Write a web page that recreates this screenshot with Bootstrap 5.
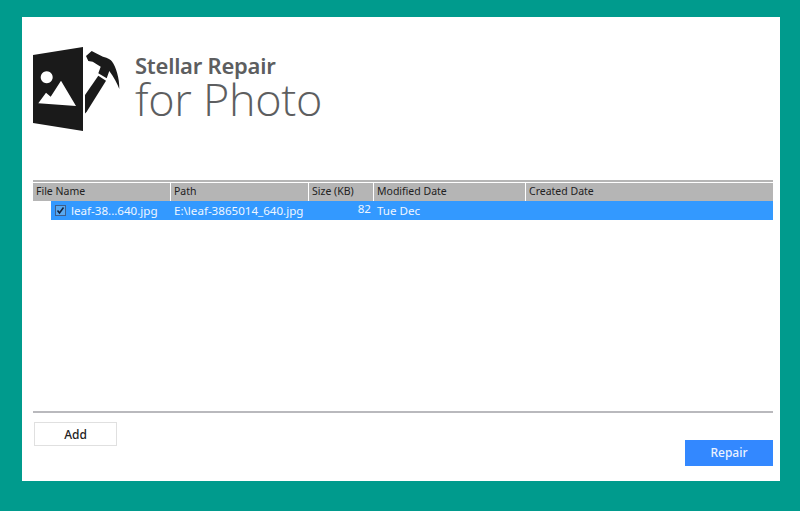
<!DOCTYPE html>
<html lang="en">
<head>
    <meta charset="UTF-8">
    <title>Stellar Repair for Photo</title>
    <link href="https://cdn.jsdelivr.net/npm/bootstrap@5.3.0/dist/css/bootstrap.min.css" rel="stylesheet">
    <style>
        body {
            width: 800px;
            height: 511px;
            overflow: hidden;
            background: #009b8d;
            padding: 17px 20px 30px 22px;
            font-family: "Noto Sans", "Open Sans", sans-serif;
            font-size: 11.6px;
        }
        .app-panel {
            height: 464px;
            background: #fff;
            padding: 29px 7px 14px 11px;
        }
        .logo-row { height: 134px; }
        .logo-icon { width: 90px; height: 88px; }
        .logo-text { margin-left: 12px; color: #5d5e60; margin-top: 7px; }
        .logo-top { font-size: 22px; font-weight: 600; line-height: 24px; letter-spacing: -0.25px; }
        .logo-bottom { font-family: "Open Sans", sans-serif; font-size: 45px; font-weight: 300; line-height: 44px; letter-spacing: -0.3px; }
        .file-head {
            border-top: 2px solid #b5b5b5;
            height: 21px;
            padding-top: 1px;
            color: #222;
            font-size: 10.500px;
        }
        .file-head > div {
            background: #b5b5b5;
            height: 18px;
            line-height: 16px;
            padding-left: 3px;
            margin-right: 1px;
            white-space: nowrap;
        }
        .col-name { width: 137px; }
        .col-path { width: 137px; }
        .col-size { width: 64px; }
        .col-mod { width: 151px; }
        .col-made { flex: 1; margin-right: 0 !important; }
        .file-row {
            margin-left: 18px;
            height: 19px;
            line-height: 19px;
            background: #3399ff;
            color: #eef6ff;
        }
        .row-name { width: 120px; padding-left: 4px; }
        .row-path { width: 138px; padding-left: 3px; }
        .row-size { width: 65px; text-align: right; padding-right: 3px; line-height: 16px; }
        .row-mod { padding-left: 3px; }
        .tick-box {
            width: 11px;
            height: 11px;
            background: #5aa9f0;
            border: 1px solid #3f5f8c;
            margin-right: 5px;
        }
        .list-space { height: 191px; }
        .bottom-rule { border-top: 2px solid #b9b9bd; }
        .add-btn {
            width: 83px;
            height: 24px;
            margin: 9px 0 0 1px;
            padding: 1px 0 0;
            border: 1px solid #e0e0e0;
            border-radius: 0;
            background: #fff;
            color: #222;
            font-size: 12px;
            font-weight: 500;
        }
        .repair-btn {
            width: 88px;
            height: 26px;
            margin-top: 27px;
            padding: 0;
            border: 0;
            border-radius: 0;
            background: #3388ff;
            color: #eaf2ff;
            font-size: 12px;
            font-weight: 500;
        }
    </style>
</head>
<body>
    <div class="app-panel">
        <div class="logo-row d-flex align-items-start">
            <svg class="logo-icon" viewBox="33 46 90 88" aria-hidden="true">
                <path fill="#1a1a1a" fill-rule="evenodd" d="M33 55 83 47V131L33 123Z M46.700 71.300a6 6 0 1 0 0.010 0Z M38.300 103.300 46 92.700 50.700 96.700 61 80.700 76 106Z"/>
                <path fill="#1a1a1a" d="M86 56 91.700 51 96 53.300 103 56.700C108 58 111 60 112 61.500 116 67 119.500 78 119.300 89 117.500 84 114 77 109.300 71L106.700 78.300 98.300 73.300 100.700 66.700 92.700 61.700 88.300 61Z"/>
                <path fill="#1a1a1a" d="M98.300 75.700 106 80.700 86.700 111.700 85 113.500V95Z"/>
            </svg>
            <div class="logo-text">
                <div class="logo-top">Stellar Repair</div>
                <div class="logo-bottom">for Photo</div>
            </div>
        </div>
        <div class="file-head d-flex">
            <div class="col-name">File Name</div>
            <div class="col-path">Path</div>
            <div class="col-size">Size (KB)</div>
            <div class="col-mod">Modified Date</div>
            <div class="col-made">Created Date</div>
        </div>
        <div class="file-row d-flex">
            <div class="row-name d-flex align-items-center">
                <span class="tick-box d-flex align-items-center justify-content-center">
                    <svg width="9" height="9" viewBox="0 0 9 9" aria-hidden="true"><path d="M1.500 4.500 3.500 7 7.500 1.500" fill="none" stroke="#12233f" stroke-width="1.600"/></svg>
                </span>
                <span>leaf-38...640.jpg</span>
            </div>
            <div class="row-path">E:\leaf-3865014_640.jpg</div>
            <div class="row-size">82</div>
            <div class="row-mod">Tue Dec</div>
        </div>
        <div class="list-space"></div>
        <div class="bottom-rule"></div>
        <div class="d-flex justify-content-between align-items-start">
            <button class="btn add-btn">Add</button>
            <button class="btn repair-btn">Repair</button>
        </div>
    </div>
</body>
</html>
